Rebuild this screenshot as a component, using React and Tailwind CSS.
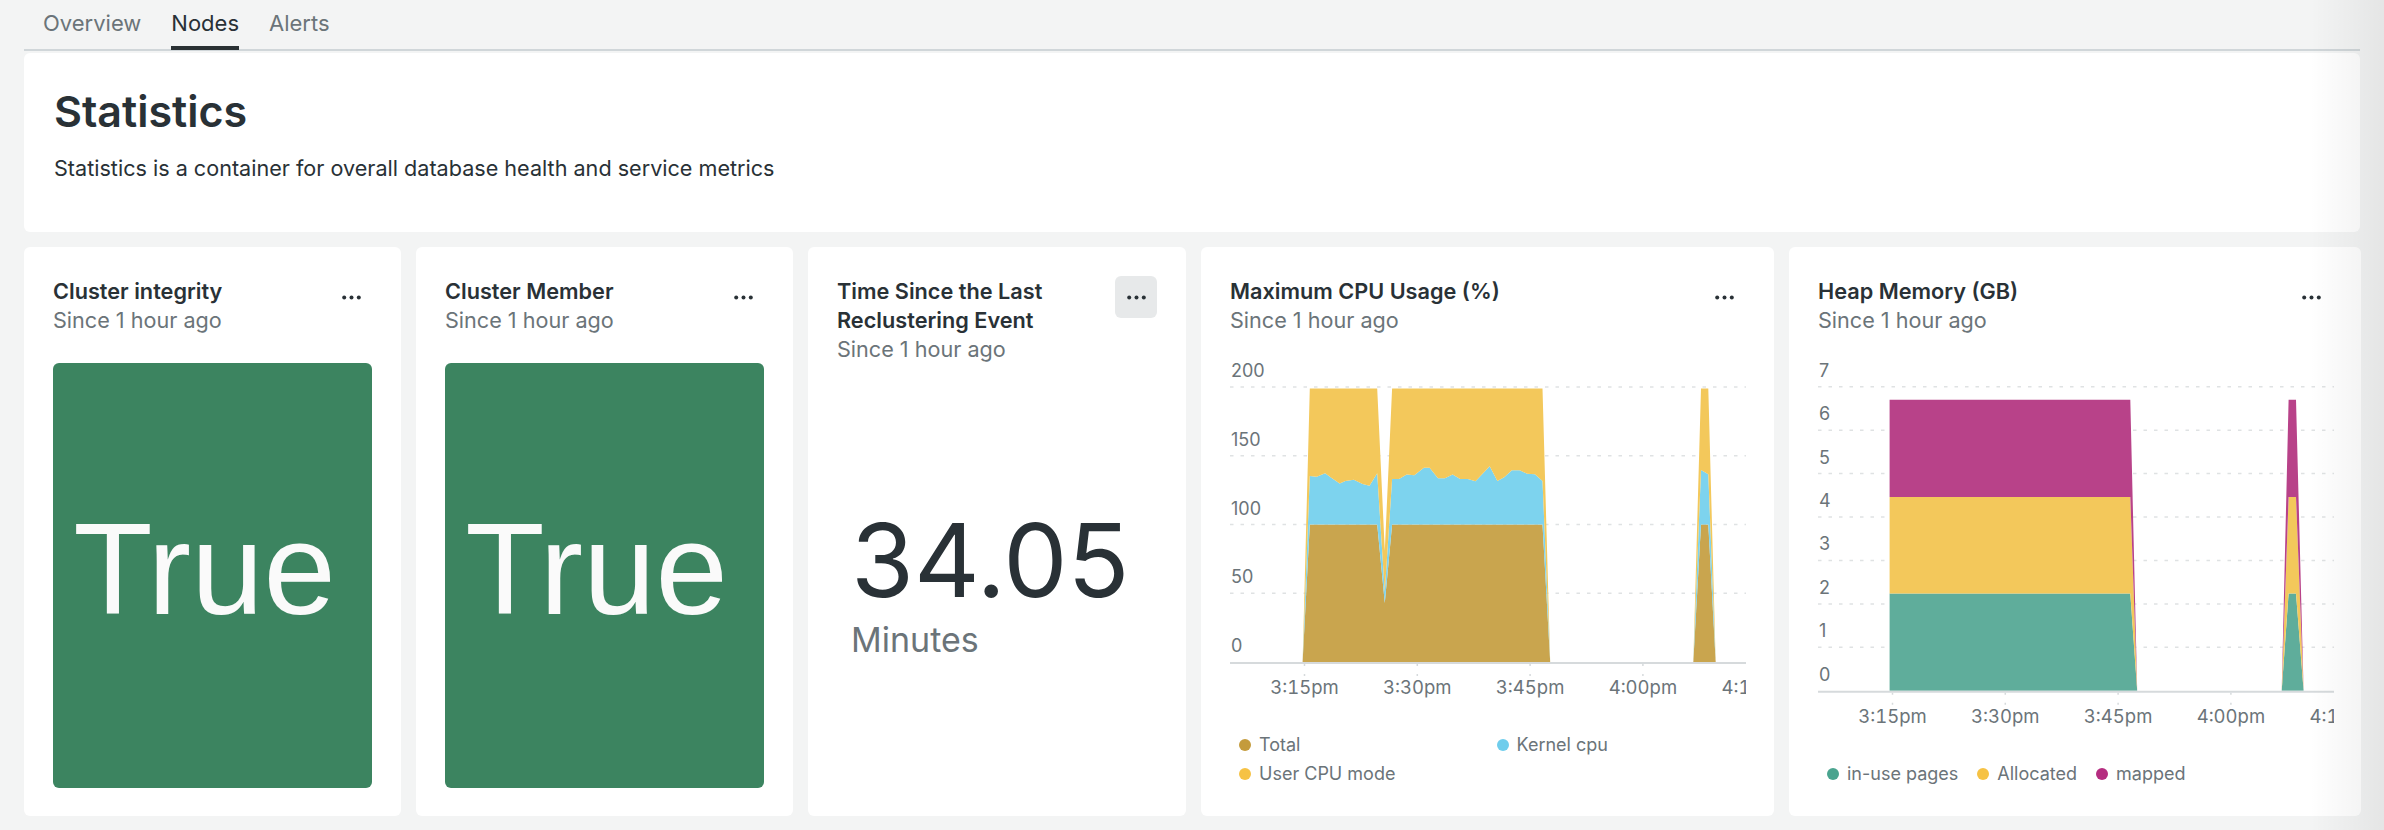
import React from 'react';

const TABS = ['Overview', 'Nodes', 'Alerts'];
const X_TICKS = ['3:15pm', '3:30pm', '3:45pm', '4:00pm', '4:15pm'];

// stacked points: [x, layer1, layer1+2, layer1+2+3]
const CPU_SEGMENTS = [
  [
    [72.6, 0, 0, 0],
    [79.8, 100, 135.2, 199],
    [86.7, 100, 134.7, 199],
    [95.1, 100, 137.2, 199],
    [102, 100, 133.6, 199],
    [109.7, 100, 129.8, 199],
    [115.4, 100, 131.7, 199],
    [123.8, 100, 132.6, 199],
    [132.6, 100, 129.5, 199],
    [139.5, 100, 128.1, 199],
    [147.2, 100, 137.2, 199],
    [154.8, 43, 51, 81],
    [162.1, 100, 133.1, 199],
    [169, 100, 133.1, 199],
    [176.7, 100, 136.3, 199],
    [184.3, 100, 135.8, 199],
    [193.9, 100, 141.3, 199],
    [199.6, 100, 141.3, 199],
    [208, 100, 133.6, 199],
    [214.9, 100, 133.6, 199],
    [222.6, 100, 136.3, 199],
    [230.2, 100, 133.1, 199],
    [237.9, 100, 133.1, 199],
    [245.5, 100, 131.5, 199],
    [259.7, 100, 142.4, 199],
    [267.4, 100, 131.7, 199],
    [274.2, 100, 134.4, 199],
    [281.9, 100, 139.4, 199],
    [289.6, 100, 139.4, 199],
    [297.2, 100, 136.9, 199],
    [304.9, 100, 136.6, 199],
    [312.5, 100, 131.7, 199],
    [320.2, 0, 0, 0],
  ],
  [
    [463.3, 0, 0, 0],
    [471, 100, 139.7, 199],
    [478.3, 100, 136.6, 199],
    [485.7, 0, 0, 0],
  ],
];

const HEAP_SEGMENTS = [
  [
    [71.6, 0, 0, 0],
    [71.6, 2.24, 4.46, 6.7],
    [312.3, 2.24, 4.46, 6.7],
    [319.2, 0, 0, 0],
  ],
  [
    [463.7, 0, 0, 0],
    [470.6, 2.24, 4.46, 6.7],
    [478, 2.24, 4.46, 6.7],
    [485.6, 0, 0, 0],
  ],
];

const Dots = () => (
  <svg width="19" height="5" viewBox="0 0 19 5" fill="#293136">
    <circle cx="2.2" cy="2.5" r="2" />
    <circle cx="9.5" cy="2.5" r="2" />
    <circle cx="16.8" cy="2.5" r="2" />
  </svg>
);

const CardHeader = ({ title, active }) => (
  <div className="flex items-start justify-between gap-3">
    <div className="min-w-0">
      <h3 className="text-[21.7px] leading-[29px] font-semibold text-[#293136]">{title}</h3>
      <p className="text-[21.6px] leading-[29px] text-[#6b7479]">Since 1 hour ago</p>
    </div>
    <button
      className={`-mt-[1px] flex h-[42px] w-[42px] shrink-0 items-center justify-center rounded-[6px] ${
        active ? 'bg-[#e7e9ea]' : ''
      }`}
    >
      <Dots />
    </button>
  </div>
);

const AreaChart = ({ height, axisY, topY, max, yTicks, segments, colors, width = 516 }) => {
  const scale = (axisY - topY) / max;
  const y = (v) => axisY - v * scale;

  const polys = [];
  segments.forEach((seg, si) => {
    colors.forEach((c, ci) => {
      const top = seg.map((p) => `${p[0]},${y(p[ci + 1])}`);
      const bottom = [...seg].reverse().map((p) => `${p[0]},${y(ci === 0 ? 0 : p[ci])}`);
      polys.push(<polygon key={`${si}-${ci}`} points={[...top, ...bottom].join(' ')} fill={c} />);
    });
  });

  return (
    <svg width={width} height={height} className="block overflow-hidden" fontFamily="Inter, sans-serif">
      {yTicks.map((v) => (
        <g key={v}>
          {v !== 0 && (
            <line x1="0" x2={width} y1={y(v)} y2={y(v)} stroke="#dfe2e3" strokeWidth="1.5" strokeDasharray="3.5 7" />
          )}
          <text x="1" y={y(v) - 10} fontSize="18" fill="#6b7479">
            {v}
          </text>
        </g>
      ))}
      {polys}
      <line x1="0" x2={width} y1={axisY + 1} y2={axisY + 1} stroke="#d6dadc" strokeWidth="2" />
      {X_TICKS.map((t, i) => {
        const x = 74.5 + i * 112.8;
        return (
          <g key={t}>
            <line x1={x} x2={x} y1={axisY + 2} y2={axisY + 16} stroke="#d6dadc" strokeWidth="1.5" strokeDasharray="2 8" />
            <text
              x={x}
              y={axisY + 32}
              fontSize="18.5"
              fill="#6b7479"
              textAnchor="middle"
              className="tabular-nums"
            >
              {t}
            </text>
          </g>
        );
      })}
    </svg>
  );
};

const LegendItem = ({ color, label }) => (
  <div className="flex h-[29px] items-center gap-[8px] pl-[9px] text-[18px] text-[#6b7479]">
    <span className={`h-[12px] w-[12px] shrink-0 rounded-full ${color}`} />
    <span>{label}</span>
  </div>
);

const BoolCard = ({ title }) => (
  <div className="flex flex-col rounded-[6px] bg-white px-[29px] pt-[30px] pb-[28px]">
    <CardHeader title={title} />
    <div className="mt-[28px] flex flex-1 items-center justify-center rounded-[6px] bg-[#3c8460] pr-[16px] pb-[14px]">
      <span className="font-['Liberation_Sans',Arial,sans-serif] text-[130px] leading-none text-[#fafafa]">True</span>
    </div>
  </div>
);

export default function App() {
  return (
    <div className="relative min-h-screen overflow-hidden bg-[#f3f4f4] px-[24px] font-['Inter',sans-serif] text-[#293136]">
      {/* Tabs */}
      <div className="flex gap-[30px] border-b-2 border-[#d0d6d9] pl-[19px]">
        {TABS.map((t) => (
          <div key={t} className="-mb-[1px] flex flex-col pt-[8px]">
            <span className={`text-[22px] leading-[30px] ${t === 'Nodes' ? 'text-[#293136]' : 'text-[#6b7479]'}`}>{t}</span>
            <span className={`mt-[8px] h-[4px] ${t === 'Nodes' ? 'bg-[#2a3134]' : ''}`} />
          </div>
        ))}
      </div>

      {/* Statistics header card */}
      <div className="mt-[2px] rounded-[6px] bg-white px-[30px] pt-[33px] pb-[49px]">
        <h1 className="text-[43px] leading-[50px] font-semibold text-[#293136]">Statistics</h1>
        <p className="mt-[17px] text-[21.6px] leading-[30px] text-[#293136]">
          Statistics is a container for overall database health and service metrics
        </p>
      </div>

      {/* Widgets */}
      <div className="mt-[15px] grid h-[569px] grid-cols-[377px_377px_378px_573px_572px] gap-[15px]">
        <BoolCard title="Cluster integrity" />
        <BoolCard title="Cluster Member" />

        <div className="flex flex-col rounded-[6px] bg-white px-[29px] pt-[30px] pb-[28px]">
          <CardHeader title="Time Since the Last Reclustering Event" active />
          <div className="mt-[145px] flex flex-col pl-[14px]">
            <span className="text-[102px] leading-[102px] text-[#293136]">34.05</span>
            <span className="mt-[12px] text-[34px] leading-[34px] text-[#6b7479]">Minutes</span>
          </div>
        </div>

        <div className="flex flex-col rounded-[6px] bg-white px-[29px] pt-[30px] pb-[28px]">
          <CardHeader title="Maximum CPU Usage (%)" />
          <div className="mt-[23px]">
            <AreaChart
              height={345}
              axisY={304}
              topY={29}
              max={200}
              yTicks={[0, 50, 100, 150, 200]}
              segments={CPU_SEGMENTS}
              colors={['#c9a54e', '#7dd3ee', '#f3c85b']}
            />
          </div>
          <div className="mt-auto grid grid-cols-2">
            <LegendItem color="bg-[#c49b3c]" label="Total" />
            <LegendItem color="bg-[#6fcdec]" label="Kernel cpu" />
            <LegendItem color="bg-[#f6c244]" label="User CPU mode" />
          </div>
        </div>

        <div className="flex flex-col rounded-[6px] bg-white px-[29px] pt-[30px] pb-[28px]">
          <CardHeader title="Heap Memory (GB)" />
          <div className="mt-[23px]">
            <AreaChart
              height={374}
              axisY={332.8}
              topY={28.7}
              max={7}
              yTicks={[0, 1, 2, 3, 4, 5, 6, 7]}
              segments={HEAP_SEGMENTS}
              colors={['#5fad9b', '#f3c85b', '#b84289']}
            />
          </div>
          <div className="mt-auto flex gap-[19px]">
            <LegendItem color="bg-[#4aa48f]" label="in-use pages" />
            <div className="-ml-[9px]">
              <LegendItem color="bg-[#f6c244]" label="Allocated" />
            </div>
            <div className="-ml-[9px]">
              <LegendItem color="bg-[#b52d80]" label="mapped" />
            </div>
          </div>
        </div>
      </div>

      {/* right edge fade */}
      <div className="pointer-events-none absolute inset-y-0 right-0 w-[74px] bg-linear-to-r from-transparent to-black/[0.06]" />
    </div>
  );
}
